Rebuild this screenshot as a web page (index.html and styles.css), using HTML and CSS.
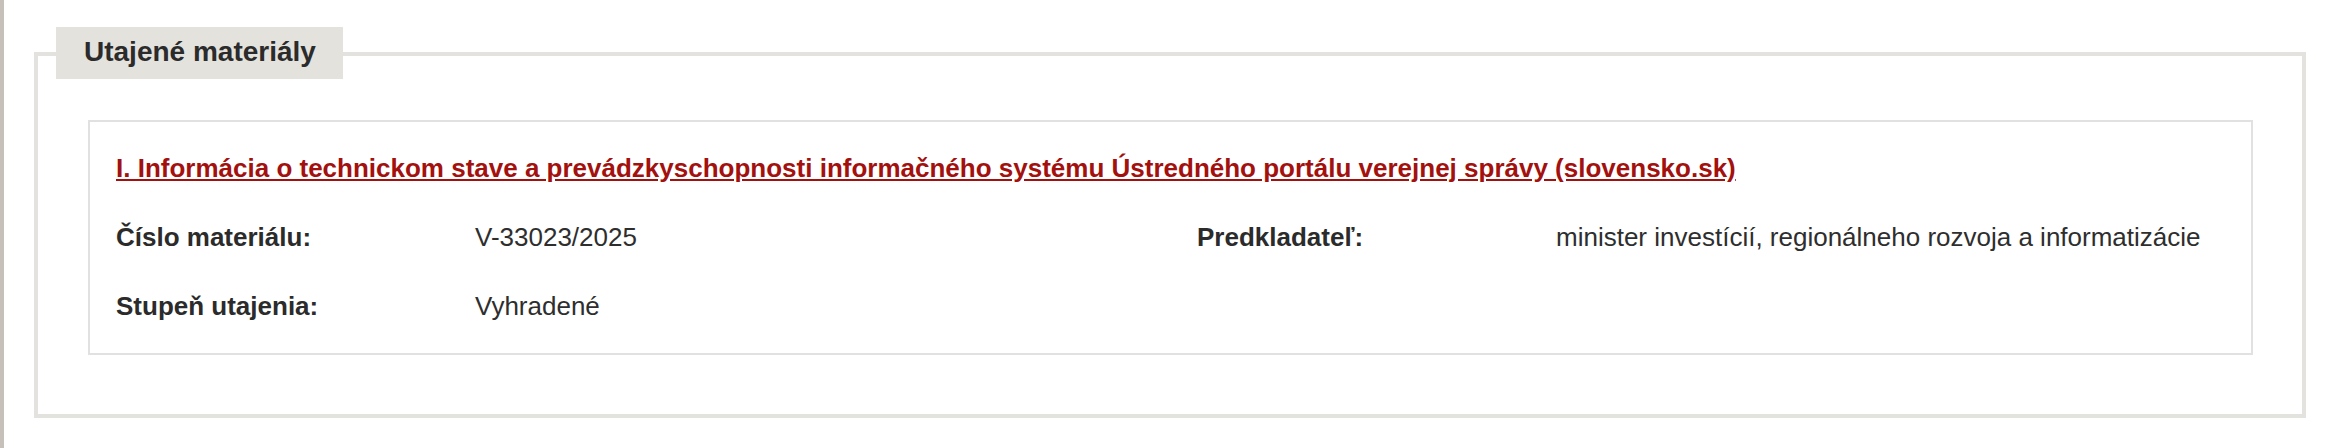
FILE: index.html
```html
<!DOCTYPE html>
<html lang="sk">
<head>
<meta charset="utf-8">
<title>Utajené materiály</title>
<link rel="stylesheet" href="styles.css">
</head>
<body>
<div class="page">
  <div class="strip"></div>
  <main class="main">
    <section class="panel">
      <h2 class="legend">Utajené materiály</h2>
      <div class="card">
        <a class="card-title" href="#">I. Informácia o technickom stave a prevádzkyschopnosti informačného systému Ústredného portálu verejnej správy (slovensko.sk)</a>
        <dl class="meta">
          <dt class="label">Číslo materiálu:</dt>
          <dd class="value">V-33023/2025</dd>
          <dt class="label">Predkladateľ:</dt>
          <dd class="value">minister investícií, regionálneho rozvoja a informatizácie</dd>
          <dt class="label">Stupeň utajenia:</dt>
          <dd class="value">Vyhradené</dd>
        </dl>
      </div>
    </section>
  </main>
</div>
</body>
</html>
```
FILE: styles.css
```css
html, body {
  margin: 0;
  padding: 0;
  background: #ffffff;
}
body {
  font-family: "Liberation Sans", Arial, sans-serif;
  color: #2e2e2e;
}
.page {
  display: flex;
  min-height: 448px;
}
.strip {
  width: 4px;
  flex: 0 0 4px;
  background: #c5c0b9;
}
.main {
  flex: 1;
  padding: 52px 22px 30px 30px;
}
.panel {
  border: 4px solid #e3e2de;
  padding: 0 49px 59px 50px;
}
.legend {
  display: block;
  width: fit-content;
  margin: -29px 0 0 -32px;
  padding: 0 27px 2px 28px;
  height: 50px;
  line-height: 50px;
  background: #e3e2dd;
  font-size: 28px;
  font-weight: bold;
  color: #2b2b2b;
}
.card {
  margin-top: 41px;
  border: 2px solid #e1e1e1;
  padding: 31px 26px 30px 26px;
}
.card-title {
  display: block;
  font-size: 26px;
  line-height: 30px;
  font-weight: bold;
  color: #a3110f;
  text-decoration: underline;
}
.meta {
  display: grid;
  grid-template-columns: 359px 722px 359px 1fr;
  row-gap: 35px;
  margin: 37px 0 0 0;
  font-size: 26px;
  line-height: 34px;
}
.label {
  margin: 0;
  font-weight: bold;
  color: #2b2b2b;
}
.value {
  margin: 0;
  color: #2e2e2e;
}
```
